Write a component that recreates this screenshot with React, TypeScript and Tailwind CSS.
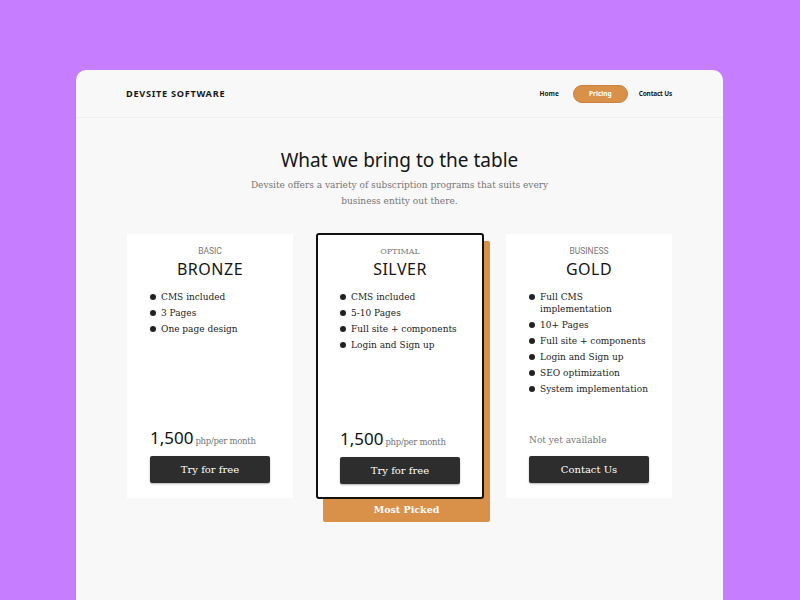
import React from "react";

type Plan = {
  tier: string;
  name: string;
  features: string[];
  price?: string;
  cta: string;
  featured?: boolean;
  tierSerif?: boolean;
};

const plans: Plan[] = [
  { tier: "BASIC", name: "BRONZE", features: ["CMS included", "3 Pages", "One page design"], price: "1,500", cta: "Try for free" },
  {
    tier: "OPTIMAL",
    name: "SILVER",
    features: ["CMS included", "5-10 Pages", "Full site + components", "Login and Sign up"],
    price: "1,500",
    cta: "Try for free",
    featured: true,
    tierSerif: true,
  },
  {
    tier: "BUSINESS",
    name: "GOLD",
    features: [
      "Full CMS implementation",
      "10+ Pages",
      "Full site + components",
      "Login and Sign up",
      "SEO optimization",
      "System implementation",
    ],
    cta: "Contact Us",
  },
];

const sans = "font-['Noto_Sans',sans-serif]";
const serif = "font-['DejaVu_Serif',serif]";

function PlanCard({ plan }: { plan: Plan }) {
  return (
    <div
      className={
        "relative flex h-full flex-col bg-white " +
        (plan.featured ? "rounded-[3px] border-2 border-[#111] px-[22px] pb-[13px] pt-[11px]" : "px-[23px] pb-[15px] pt-[12px]")
      }
    >
      <div
        className={
          "text-center text-[8.5px] leading-[11px] text-[#777] " +
          (plan.tierSerif ? serif + " text-[8px]" : "font-['Roboto',sans-serif]")
        }
      >
        {plan.tier}
      </div>
      <div className={sans + " mt-[2px] text-center text-[16px] leading-[20px] tracking-[0.5px] text-[#151515]"}>
        {plan.name}
      </div>
      <ul className="mt-[12px]">
        {plan.features.map((f) => (
          <li key={f} className={serif + " mb-[4px] flex items-start text-[9px] leading-[12px] text-[#1c1c1c]"}>
            <span className="mr-[5px] mt-[3px] h-[6px] w-[6px] shrink-0 rounded-full bg-[#222]" />
            <span className="max-w-[118px]">{f}</span>
          </li>
        ))}
      </ul>
      <div className="mt-auto">
        {plan.price ? (
          <div className="flex h-[22px] items-baseline">
            <span className={sans + " text-[17px] leading-[22px] text-[#111]"}>{plan.price}</span>
            <span className={serif + " ml-[2px] text-[8.5px] tracking-[-0.3px] text-[#777]"}>php/per month</span>
          </div>
        ) : (
          <div className={serif + " h-[22px] text-[9px] leading-[26px] text-[#777]"}>Not yet available</div>
        )}
        <button
          className={
            serif +
            " mt-[7px] h-[27px] w-[120px] rounded-[2px] bg-[#2d2d2d] text-[10px] text-white shadow-[0_1px_2px_rgba(0,0,0,0.3)]"
          }
        >
          {plan.cta}
        </button>
      </div>
    </div>
  );
}

export default function App() {
  return (
    <div className="min-h-[600px] w-[800px] overflow-hidden bg-[#c77dff] pt-[70px]">
      <div className="ml-[76px] h-[530px] w-[647px] rounded-t-[10px] bg-[#f8f8f8]">
        {/* Header */}
        <header className="flex h-[48px] items-center justify-between border-b border-[#efefef] pb-[2px] pl-[50px] pr-[51px] pt-[3px]">
          <div className={sans + " text-[9.2px] font-bold tracking-[0.7px] text-[#1a1a1a]"}>DEVSITE SOFTWARE</div>
          <nav className={sans + " flex items-center text-[6.5px] font-bold text-[#1a1a1a]"}>
            <a className="mr-[14px]">Home</a>
            <a className="flex h-[18px] w-[55px] items-center justify-center rounded-full border border-[#c98040] bg-[#d9914a] text-white">
              Pricing
            </a>
            <a className="ml-[11px] tracking-[-0.2px]">Contact Us</a>
          </nav>
        </header>

        {/* Heading */}
        <div className="mt-[29px] text-center">
          <h1 className={sans + " text-[19px] leading-[26px] text-[#151515]"}>What we bring to the table</h1>
          <p className={serif + " mx-auto mt-[4px] w-[310px] text-[9px] leading-[16px] text-[#777]"}>
            Devsite offers a variety of subscription programs that suits every business entity out there.
          </p>
        </div>

        {/* Plans */}
        <div className="mt-[24px] flex items-start pl-[51px]">
          <div className="mt-[1px] h-[264px] w-[166px]">
            <PlanCard plan={plans[0]} />
          </div>
          <div className="relative ml-[23px] h-[266px] w-[168px]">
            <div className="absolute left-[7px] top-[8px] flex h-[281px] w-[167px] items-end justify-center rounded-[2px] bg-[#d9914a] pb-[6px]">
              <span className={serif + " text-[9.5px] font-bold leading-[12px] text-white"}>Most Picked</span>
            </div>
            <PlanCard plan={plans[1]} />
          </div>
          <div className="ml-[22px] mt-[1px] h-[264px] w-[166px]">
            <PlanCard plan={plans[2]} />
          </div>
        </div>
      </div>
    </div>
  );
}
